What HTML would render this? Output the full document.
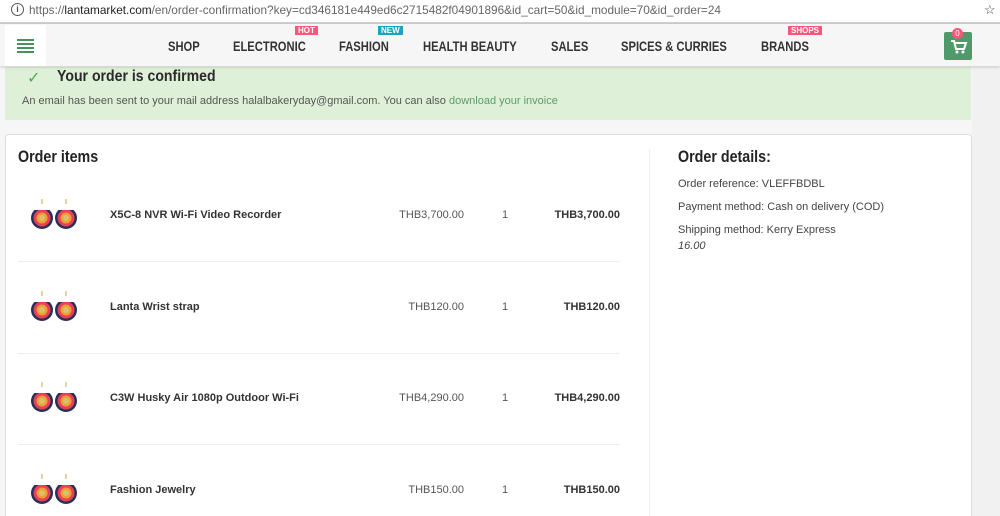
<!DOCTYPE html>
<html><head><style>
html,body{margin:0;width:1000px;height:516px;overflow:hidden}
body{background:#f6f6f6;font-family:"Liberation Sans",sans-serif;position:relative}
.abs{position:absolute}
.url{left:0;top:0;width:1000px;height:22px;background:#fff;border-bottom:2px solid #d0d0d0;font-size:13px;color:#666;line-height:20px}
.nav{top:24px;left:0;width:1000px;height:42px;background:#f6f6f6;box-shadow:0 1px 3px rgba(0,0,0,.2);z-index:2}
.nav span.i{position:absolute;top:14px;font-weight:bold;font-size:14px;color:#333;transform:scaleX(.8);transform-origin:left;white-space:nowrap}
.tag{position:absolute;top:2px;font-size:8px;color:#fff;padding:0 3px;line-height:9px;font-weight:bold}
.alert{left:5px;top:67px;width:966px;height:53px;background:#dff0d8;color:#3c763d}
.card{left:5px;top:134px;width:965px;height:400px;background:#fff;border:1px solid #ddd;border-radius:4px}
h3{margin:0;font-size:17px;color:#232323;position:absolute;transform:scaleX(.84);transform-origin:left;white-space:nowrap}
.row{position:absolute;left:18px;width:602px;height:91px;border-bottom:1px solid #eee;font-size:11px;color:#333}
.row .n{position:absolute;left:92px;top:39px;font-weight:bold}
.row .p{position:absolute;right:156px;top:39px;color:#555}
.row .q{position:absolute;left:484px;top:39px;color:#555}
.row .t{position:absolute;right:0;top:39px;font-weight:bold}
.img{position:absolute;left:10px;top:26px;width:52px;height:38px}
.det{font-size:11px;color:#444;position:absolute;left:678px;line-height:16px}
</style></head><body>
<svg width="0" height="0" style="position:absolute"><defs><g id="ear"><path d="M14 13V3M38 13V3" stroke="#c9a74a" stroke-width="1" fill="none"/><g><circle cx="14" cy="22" r="11" fill="#2a2f55"/><circle cx="14" cy="22" r="8.5" fill="#e8405a"/><circle cx="14" cy="22" r="5.5" fill="#f0a030"/><circle cx="14" cy="22" r="3" fill="#d9c070"/><circle cx="38" cy="22" r="11" fill="#2a2f55"/><circle cx="38" cy="22" r="8.5" fill="#e8405a"/><circle cx="38" cy="22" r="5.5" fill="#f0a030"/><circle cx="38" cy="22" r="3" fill="#d9c070"/><rect x="0" y="8" width="52" height="6" fill="#fff"/></g></g></defs></svg>
<div class="abs url"><span style="position:absolute;left:11px;top:3px;width:11px;height:11px;border:1.5px solid #555;border-radius:50%;font-size:9px;line-height:11px;text-align:center;color:#555;font-weight:bold">i</span><span style="position:absolute;left:29px;font-size:11.8px">https://<span style="color:#222">lantamarket.com</span>/en/order-confirmation?key=cd346181e449ed6c2715482f04901896&amp;id_cart=50&amp;id_module=70&amp;id_order=24</span><span style="position:absolute;left:984px;top:0;color:#444">☆</span></div>
<div class="abs nav">
<div style="position:absolute;left:5px;top:1px;width:41px;height:41px;background:#fff"><div style="position:absolute;left:12px;top:14px;width:17px;height:2px;background:#4a8f5f;box-shadow:0 4px 0 #4a8f5f,0 8px 0 #4a8f5f,0 12px 0 #4a8f5f"></div></div>
<span class="i" style="left:168px">SHOP</span>
<span class="i" style="left:233px">ELECTRONIC</span><span class="tag" style="left:295px;background:#f5587b">HOT</span>
<span class="i" style="left:339px">FASHION</span><span class="tag" style="left:378px;background:#1aa3c4">NEW</span>
<span class="i" style="left:423px">HEALTH BEAUTY</span>
<span class="i" style="left:551px">SALES</span>
<span class="i" style="left:621px">SPICES &amp; CURRIES</span>
<span class="i" style="left:761px">BRANDS</span><span class="tag" style="left:788px;background:#f5587b">SHOPS</span>
<div style="position:absolute;left:944px;top:8px;width:28px;height:28px;background:#4e9a6b;border-radius:2px"><svg width="28" height="28" viewBox="0 0 28 28"><path d="M7 9h3l2 8h8l2-6H11" stroke="#fff" stroke-width="2" fill="none"/><circle cx="13" cy="20" r="1.5" fill="#fff"/><circle cx="19" cy="20" r="1.5" fill="#fff"/></svg></div>
<div style="position:absolute;left:952px;top:4px;width:11px;height:11px;border-radius:50%;background:#f5587b;color:#fff;font-size:8px;text-align:center;line-height:11px">0</div>
</div>
<div class="abs" style="left:972px;top:67px;width:28px;height:449px;background:#f1f1f1"></div>
<div class="abs alert">
<span style="position:absolute;left:22px;top:1px;font-size:16px;color:#4cae4c">✓</span>
<span style="position:absolute;left:52px;top:1px;font-weight:bold;font-size:16px;color:#2a2a2a;transform:scaleX(.88);transform-origin:left;white-space:nowrap">Your order is confirmed</span>
<span style="position:absolute;left:17px;top:28px;font-size:11px;color:#555">An email has been sent to your mail address halalbakeryday@gmail.com. You can also <span style="color:#5d9a6e">download your invoice</span></span>
</div>
<div class="abs card">
<h3 style="left:12px;top:12px">Order items</h3>
<h3 style="left:672px;top:12px">Order details:</h3>
<div style="position:absolute;left:643px;top:14px;width:1px;height:390px;background:#eee"></div>
</div>
<div class="det" style="top:176px">Order reference: VLEFFBDBL</div>
<div class="det" style="top:199px">Payment method: Cash on delivery (COD)</div>
<div class="det" style="top:222px">Shipping method: Kerry Express<br><i>16.00</i></div>
<div class="row" style="top:170px"><svg class="img" viewBox="0 0 52 38"><use href="#ear"/></svg><span class="n">X5C-8 NVR Wi-Fi Video Recorder</span><span class="p">THB3,700.00</span><span class="q">1</span><span class="t">THB3,700.00</span></div>
<div class="row" style="top:262px"><svg class="img" viewBox="0 0 52 38"><use href="#ear"/></svg><span class="n">Lanta Wrist strap</span><span class="p">THB120.00</span><span class="q">1</span><span class="t">THB120.00</span></div>
<div class="row" style="top:353px"><svg class="img" viewBox="0 0 52 38"><use href="#ear"/></svg><span class="n">C3W Husky Air 1080p Outdoor Wi-Fi</span><span class="p">THB4,290.00</span><span class="q">1</span><span class="t">THB4,290.00</span></div>
<div class="row" style="top:445px;border:none"><svg class="img" viewBox="0 0 52 38"><use href="#ear"/></svg><span class="n">Fashion Jewelry</span><span class="p">THB150.00</span><span class="q">1</span><span class="t">THB150.00</span></div>
</body></html>
